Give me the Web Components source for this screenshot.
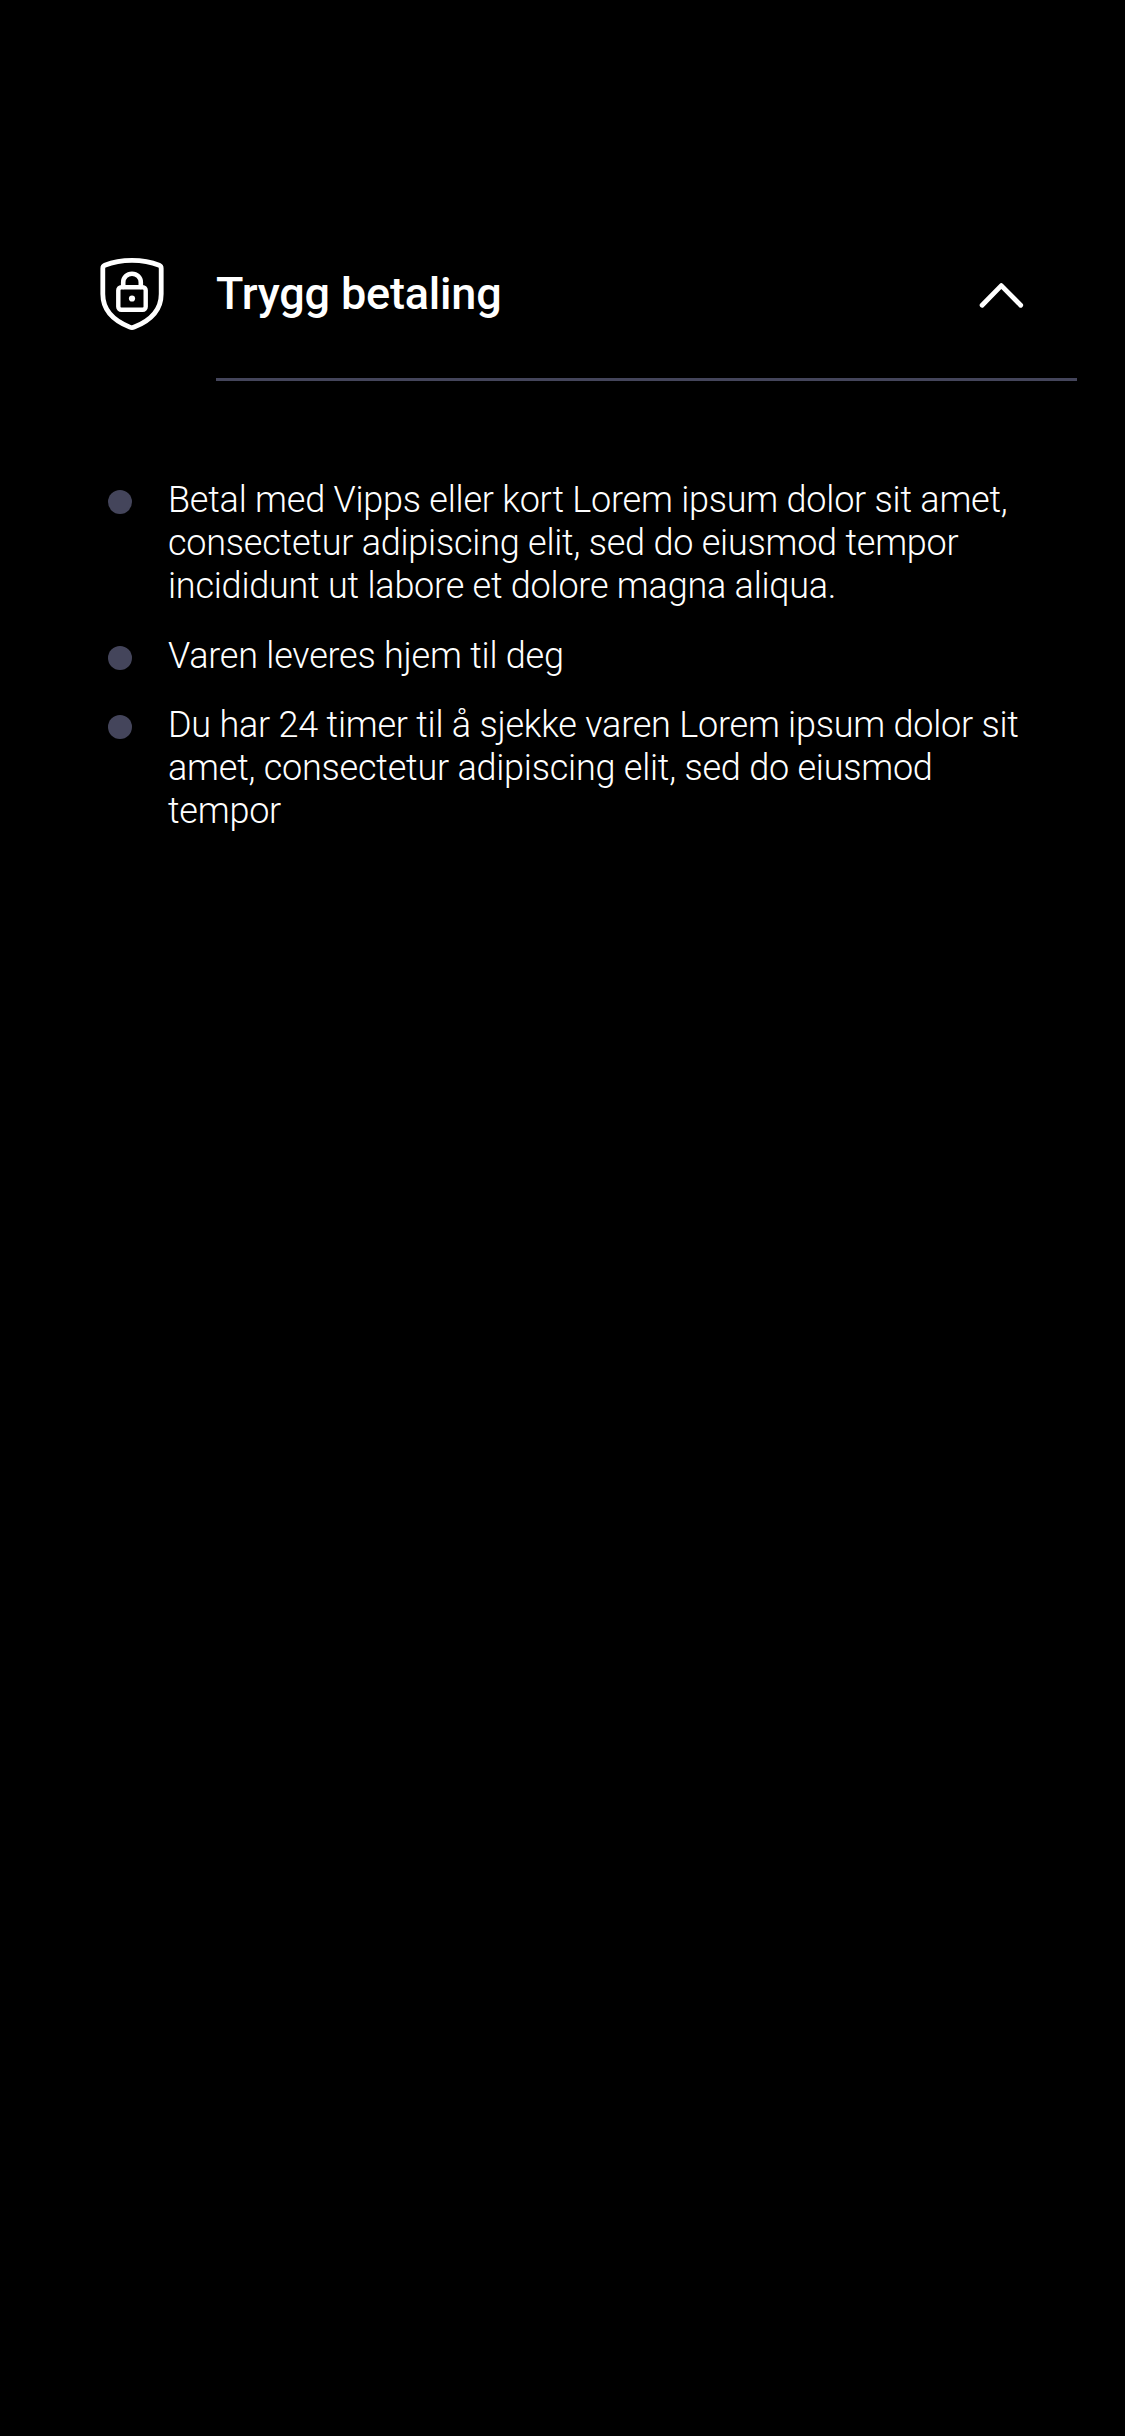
<!DOCTYPE html>
<html lang="no">
<head>
<meta charset="utf-8">
<title>Trygg betaling</title>
<style>
  html, body { margin: 0; background: #000; }
  body { color: #fff; font-family: Roboto, "Liberation Sans", sans-serif; min-height: 2436px; }
</style>
</head>
<body>
<info-panel>
  <panel-header slot="header">
    <shield-icon slot="icon"></shield-icon>
    Trygg betaling
    <chevron-icon slot="toggle"></chevron-icon>
  </panel-header>
  <bullet-item>Betal med Vipps eller kort Lorem ipsum dolor sit amet, consectetur adipiscing elit, sed do eiusmod tempor incididunt ut labore et dolore magna aliqua.</bullet-item>
  <bullet-item>Varen leveres hjem til deg</bullet-item>
  <bullet-item>Du har 24 timer til å sjekke varen Lorem ipsum dolor sit amet, consectetur adipiscing elit, sed do eiusmod tempor</bullet-item>
</info-panel>
<script>
const define = (name, html) => customElements.define(name, class extends HTMLElement {
  constructor() {
    super();
    this.attachShadow({ mode: 'open' }).innerHTML = html;
  }
});

define('shield-icon', `
  <style>:host { display: block; width: 72px; height: 80px; } svg { display: block; }</style>
  <svg width="72" height="80" viewBox="96 254 72 80" fill="none" stroke="#fff" stroke-width="4.8" stroke-linecap="round" stroke-linejoin="round">
    <path d="M132 260.4C142 260.4 151.5 262.2 159.2 265.3C160.6 265.9 161.2 266.9 161.2 268.4V294C161.2 309.5 150.5 320.6 134.2 327.1Q132 328 129.8 327.1C113.5 320.6 102.8 309.5 102.8 294V268.4C102.8 266.9 103.4 265.9 104.8 265.3C112.5 262.2 122 260.4 132 260.4Z"/>
    <rect x="118.3" y="287.2" width="27.4" height="22.5" rx="3" stroke-width="4.4"/>
    <path d="M123.2 287V282.3A8.8 8.6 0 0 1 140.8 282.3V287" stroke-width="4.6"/>
    <circle cx="132" cy="298.5" r="3.1" fill="#fff" stroke="none"/>
  </svg>`);

define('chevron-icon', `
  <style>:host { display: block; width: 48px; height: 30px; } svg { display: block; }</style>
  <svg width="48" height="30" viewBox="977 280 48 30" fill="none" stroke="#fff" stroke-width="4.8" stroke-linecap="round" stroke-linejoin="round">
    <path d="M982.1 305.2L1001.3 285.6L1020.7 305.2"/>
  </svg>`);

define('panel-header', `
  <style>
    :host { display: flex; align-items: flex-start; height: 127px; padding: 254px 48px 0 96px; }
    .row { display: flex; flex: 1; justify-content: space-between; margin-left: 48px; height: 124px; border-bottom: 3px solid #44455b; }
    .title { font-size: 45px; font-weight: 500; line-height: 54px; letter-spacing: -0.2px; padding-top: 13px; }
    .toggle { padding: 26px 52px 0 0; }
  </style>
  <slot name="icon"></slot>
  <div class="row">
    <div class="title"><slot></slot></div>
    <div class="toggle"><slot name="toggle"></slot></div>
  </div>`);

define('bullet-item', `
  <style>
    :host { display: flex; align-items: flex-start; gap: 36px; margin-bottom: 26px; }
    :host(:nth-of-type(2)) { margin-bottom: 25px; }
    .dot { flex: none; width: 24px; height: 24px; margin-top: 12px; border-radius: 50%; background: #44455b; }
    .text { flex: 1; padding-top: 1px; font-size: 36px; font-weight: 300; line-height: 43px; letter-spacing: -0.23px; }
  </style>
  <div class="dot"></div>
  <div class="text"><slot></slot></div>`);

define('info-panel', `
  <style>
    :host { display: block; }
    .list { padding: 97px 96px 0 108px; }
  </style>
  <slot name="header"></slot>
  <div class="list"><slot></slot></div>`);
</script>
</body>
</html>
